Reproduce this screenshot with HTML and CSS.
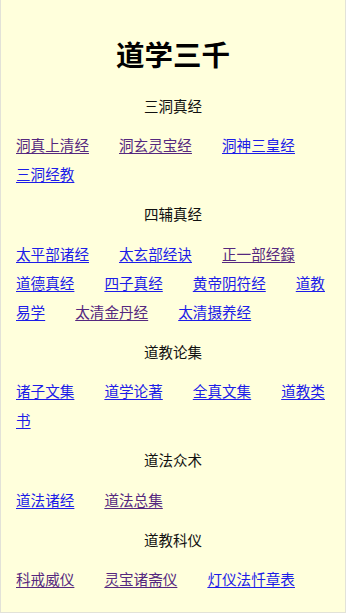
FILE: index.html
```html
<!DOCTYPE html>
<html lang="zh-CN">
<head>
<meta charset="utf-8">
<title>道学三千</title>
<link rel="stylesheet" href="styles.css">
</head>
<body>
<div class="screen">
  <h1 class="title">道学三千</h1>

  <section class="group">
    <div class="group-title">三洞真经</div>
    <p class="links"><a class="visited" href="#a1">洞真上清经</a><a class="visited" href="#a2">洞玄灵宝经</a><a href="#a3">洞神三皇经</a><a href="#a4">三洞经教</a></p>
  </section>

  <section class="group">
    <div class="group-title">四辅真经</div>
    <p class="links"><a href="#b1">太平部诸经</a><a href="#b2">太玄部经诀</a><a class="visited" href="#b3">正一部经籙</a><a href="#b4">道德真经</a><a href="#b5">四子真经</a><a href="#b6">黄帝阴符经</a><a href="#b7">道教易学</a><a class="visited" href="#b8">太清金丹经</a><a href="#b9">太清摄养经</a></p>
  </section>

  <section class="group">
    <div class="group-title">道教论集</div>
    <p class="links"><a href="#c1">诸子文集</a><a href="#c2">道学论著</a><a href="#c3">全真文集</a><a href="#c4">道教类书</a></p>
  </section>

  <section class="group">
    <div class="group-title">道法众术</div>
    <p class="links"><a href="#d1">道法诸经</a><a class="visited" href="#d2">道法总集</a></p>
  </section>

  <section class="group">
    <div class="group-title">道教科仪</div>
    <p class="links"><a class="visited" href="#e1">科戒威仪</a><a class="visited" href="#e2">灵宝诸斋仪</a><a href="#e3">灯仪法忏章表</a></p>
  </section>

  <section class="group">
    <div class="group-title">道教传记</div>
  </section>
</div>
</body>
</html>
```

FILE: styles.css
```css
html, body {
  margin: 0;
  padding: 0;
  background: #ffffff;
}

body {
  font-family: "Noto Sans CJK SC", "Noto Sans", "Liberation Sans", sans-serif;
  color: #111;
}

.screen {
  box-sizing: border-box;
  width: 346px;
  height: 613px;
  overflow: hidden;
  background: #ffffdc;
  border-left: 1px solid #e2e2d8;
  border-right: 1px solid #e2e2d8;
  border-bottom: 1px solid #e2e2d8;
  padding: 0 15px 0 15px;
}

.title {
  margin: 0;
  padding-top: 36px;
  height: 42px;
  line-height: 36px;
  font-size: 28.5px;
  font-weight: bold;
  text-align: center;
  color: #000;
}

.group {
  display: flex;
  flex-direction: column;
}

.group-title {
  margin-top: 12.5px;
  font-size: 14.5px;
  line-height: 29px;
  text-align: center;
  color: #111;
}

.links {
  margin: 10.5px 0 0 0;
  font-size: 14.6px;
  line-height: 29px;
  word-break: break-all;
}

.group + .group .group-title {
  margin-top: 11px;
}

.links a {
  color: #1c1ce8;
  text-decoration: underline;
  text-underline-offset: 2px;
  margin-right: 30px;
}

.links a.visited {
  color: #55287f;
}
```
